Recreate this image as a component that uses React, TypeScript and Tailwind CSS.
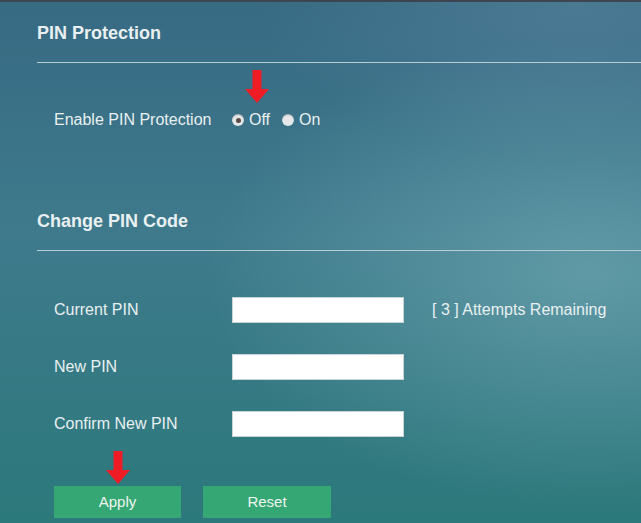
import * as React from "react";

function DownArrow({ className }: { className?: string }) {
  return (
    <svg className={className} width="24" height="33" viewBox="0 0 24 33">
      <path d="M7.5 0h9v19h7.5L12 33 0 19h7.5z" fill="#ee1c24" />
    </svg>
  );
}

function Radio({ checked, label }: { checked?: boolean; label: string }) {
  return (
    <label className="flex items-center gap-[5px]">
      <span className="flex h-[12px] w-[12px] items-center justify-center rounded-full bg-[#e4e8e8] shadow-[inset_0_1px_1px_rgba(0,0,0,0.25)]">
        {checked && <span className="h-[5px] w-[5px] rounded-full bg-[#5a4a48]" />}
      </span>
      <span>{label}</span>
    </label>
  );
}

function Field({ label, note }: { label: string; note?: string }) {
  return (
    <div className="flex h-[26px] items-center">
      <span className="w-[178px]">{label}</span>
      <div className="h-[26px] w-[172px] border border-[#c9d4d8] bg-white" />
      {note && <span className="ml-[28px]">{note}</span>}
    </div>
  );
}

export default function App() {
  return (
    <div
      className="h-[523px] w-[641px] overflow-hidden border-t-[2px] border-[#3b464e] bg-[radial-gradient(ellipse_60%_45%_at_92%_52%,rgba(125,180,190,0.55),transparent),radial-gradient(ellipse_50%_30%_at_90%_0%,rgba(100,140,170,0.45),transparent),linear-gradient(180deg,#376a83_0%,#3e7a8c_45%,#2c797b_100%)] text-[#e9f0f1]"
      style={{ fontFamily: '"Liberation Sans", Arial, sans-serif' }}
    >
      <div className="pl-[37px] pt-[21px]">
        <h2 className="text-[18px] font-bold leading-[20px]">PIN Protection</h2>
        <div className="mt-[19px] h-[1px] bg-[#b8cdd4]" />

        <div className="relative pl-[17px] pt-[48px] text-[16px]">
          <DownArrow className="absolute left-[208px] top-[7px]" />
          <div className="flex h-[18px] items-center">
            <span className="w-[178px]">Enable PIN Protection</span>
            <div className="flex items-center gap-[12px]">
              <Radio checked label="Off" />
              <Radio label="On" />
            </div>
          </div>
        </div>

        <h2 className="mt-[82px] text-[18px] font-bold leading-[20px]">Change PIN Code</h2>
        <div className="mt-[19px] h-[1px] bg-[#b8cdd4]" />

        <div className="flex flex-col gap-[31px] pl-[17px] pt-[46px] text-[16px]">
          <Field label="Current PIN" note="[ 3 ] Attempts Remaining" />
          <Field label="New PIN" />
          <Field label="Confirm New PIN" />
        </div>

        <div className="relative pl-[17px] pt-[49px]">
          <DownArrow className="absolute left-[69px] top-[14px]" />
          <div className="flex gap-[22px] text-[15px]">
            <button className="h-[32px] w-[127px] bg-[#35a775] text-[#eef5ef]">Apply</button>
            <button className="h-[32px] w-[128px] bg-[#35a775] text-[#eef5ef]">Reset</button>
          </div>
        </div>
      </div>
    </div>
  );
}
